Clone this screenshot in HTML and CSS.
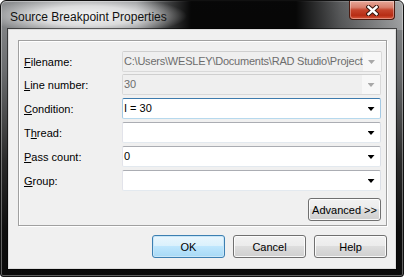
FILE: index.html
```html
<!DOCTYPE html>
<html>
<head>
<meta charset="utf-8">
<title>Source Breakpoint Properties</title>
<link rel="stylesheet" href="styles.css">
</head>
<body>
<div class="window">
  <div class="titlebar">
    <span class="title">Source Breakpoint Properties</span>
    <div class="close">
      <svg width="13" height="11" viewBox="0 0 13 11">
        <path d="M2.5 2 L10.5 9 M10.5 2 L2.5 9" stroke="#3a1810" stroke-width="4.4" stroke-linecap="square" fill="none"/>
        <path d="M2.5 2 L10.5 9 M10.5 2 L2.5 9" stroke="#ffffff" stroke-width="2.4" stroke-linecap="square" fill="none"/>
      </svg>
    </div>
  </div>
  <div class="client">
    <div class="group">
      <div class="row first">
        <span class="label"><u>F</u>ilename:</span>
        <div class="combo disabled"><span class="combo-text path">C:\Users\WESLEY\Documents\RAD Studio\Project</span><span class="arrow"></span></div>
      </div>
      <div class="row">
        <span class="label"><u>L</u>ine number:</span>
        <div class="combo disabled"><span class="combo-text">30</span><span class="arrow"></span></div>
      </div>
      <div class="row">
        <span class="label"><u>C</u>ondition:</span>
        <div class="combo focused"><span class="combo-text">I = 30</span><span class="arrow"></span></div>
      </div>
      <div class="row">
        <span class="label">T<u>h</u>read:</span>
        <div class="combo"><span class="combo-text"></span><span class="arrow"></span></div>
      </div>
      <div class="row">
        <span class="label"><u>P</u>ass count:</span>
        <div class="combo"><span class="combo-text">0</span><span class="arrow"></span></div>
      </div>
      <div class="row">
        <span class="label"><u>G</u>roup:</span>
        <div class="combo"><span class="combo-text"></span><span class="arrow"></span></div>
      </div>
      <div class="adv-row">
        <div class="btn">Advanced &gt;&gt;</div>
      </div>
    </div>
    <div class="buttons">
      <div class="btn default">OK</div>
      <div class="btn">Cancel</div>
      <div class="btn">Help</div>
    </div>
  </div>
</div>
</body>
</html>
```
FILE: styles.css
```css
* { box-sizing: border-box; }
html, body { margin: 0; padding: 0; }
body {
  width: 404px;
  height: 277px;
  overflow: hidden;
  background: #ffffff;
  font-family: "Liberation Sans", Arial, sans-serif;
  font-size: 11px;
  color: #000;
}
.window {
  width: 404px;
  height: 277px;
  display: flex;
  flex-direction: column;
  border: 1px solid #111;
  border-radius: 6px 6px 3px 3px;
  overflow: hidden;
  background: linear-gradient(to bottom, #8e9092 0, #6a6c6e 70px, #2a2a2a 160px, #0e0e0e 230px, #0a0a0a 100%);
  box-shadow: inset 0 0 0 1px rgba(255,255,255,0.35);
}
.titlebar {
  height: 29px;
  flex: none;
  display: flex;
  align-items: flex-start;
  padding-left: 9px;
  background:
    radial-gradient(ellipse 100px 20px at 86px 15px, rgba(255,255,255,0.92) 0, rgba(255,255,255,0.7) 50%, rgba(255,255,255,0) 100%),
    linear-gradient(to right, rgba(0,0,0,0) 0, rgba(0,0,0,0) 135px, rgba(0,0,0,0.95) 190px, rgba(0,0,0,0.95) 295px, rgba(0,0,0,0.35) 340px, rgba(255,255,255,0.25) 404px);
}
.title {
  font-family: "Liberation Sans", Arial, sans-serif;
  font-size: 12px;
  line-height: 14px;
  padding-top: 9px;
  color: #111;
}
.close {
  margin-left: auto;
  margin-right: 8px;
  width: 46px;
  height: 19px;
  display: flex;
  align-items: center;
  justify-content: center;
  border: 1px solid #4a1a10;
  border-top: none;
  border-radius: 0 0 4px 4px;
  background: linear-gradient(to bottom, #e7a798 0, #d8806e 35%, #c5442c 50%, #b72d15 80%, #d9583c 100%);
  box-shadow: inset 0 0 0 1px rgba(255,255,255,0.35);
}
.close svg { display: block; }
.client {
  flex: 1;
  margin: 0 8px 8px 8px;
  background: #f0f0f0;
  padding: 10px 8px 0 9px;
  display: flex;
  flex-direction: column;
  box-shadow: 0 0 0 1px #dcdcdc, 0 0 0 2px rgba(0,0,0,0.55);
}
.group {
  height: 186px;
  flex: none;
  border: 1px solid #a0a0a0;
  box-shadow: inset 1px 1px 0 #ffffff, 1px 1px 0 #ffffff;
  padding: 10px 5px 0 5px;
  display: flex;
  flex-direction: column;
}
.row {
  display: flex;
  align-items: center;
  height: 21px;
  margin-bottom: 3px;
}
.row.first { margin-bottom: 2px; }
.label {
  width: 98px;
  flex: none;
  white-space: nowrap;
}
.label u { text-underline-offset: 1px; }
.combo {
  flex: 1;
  height: 21px;
  display: flex;
  border: 1px solid;
  border-color: #abadb3 #dbdfe6 #e3e9ef #e2e3ea;
  border-radius: 2px;
  background: #ffffff;
}
.combo-text {
  flex: 1;
  padding-left: 1px;
  line-height: 19px;
  white-space: nowrap;
  overflow: hidden;
}
.combo-text.path { letter-spacing: -0.22px; }
.arrow {
  width: 18px;
  flex: none;
  display: flex;
  align-items: center;
  justify-content: center;
}
.arrow::after {
  content: "";
  width: 7px;
  height: 4px;
  background: #000;
  clip-path: polygon(0 0, 100% 0, 50% 100%);
  margin-top: 1px;
}
.combo.disabled {
  border-color: #cfcfcf #d9d9d9 #d9d9d9 #d9d9d9;
  background: #f7f7f7;
  color: #6d6d6d;
}
.combo.disabled .combo-text { background: #efefef; }
.combo.disabled .arrow::after { background: #a8a8a8; }
.combo.focused {
  border-color: #3d7bad #a4c9e3 #b7d9ed #a4c9e3;
}
.adv-row {
  display: flex;
  justify-content: flex-end;
  margin-top: 4px;
}
.btn {
  width: 73px;
  height: 23px;
  display: flex;
  align-items: center;
  justify-content: center;
  border: 1px solid #707070;
  border-radius: 3px;
  background: linear-gradient(to bottom, #f2f2f2 0, #ebebeb 50%, #dddddd 50%, #cfcfcf 100%);
  box-shadow: inset 0 0 0 1px rgba(255,255,255,0.85);
  white-space: nowrap;
}
.btn.default {
  border-color: #3c7fb1;
  background: linear-gradient(to bottom, #eaf6fd 0, #d9f0fc 50%, #bee6fd 50%, #a7d9f5 100%);
  box-shadow: inset 0 0 0 1px #c8e6f8, 0 0 0 0 transparent;
}
.buttons {
  display: flex;
  justify-content: flex-end;
  gap: 8px;
  margin-top: 9px;
}
```
